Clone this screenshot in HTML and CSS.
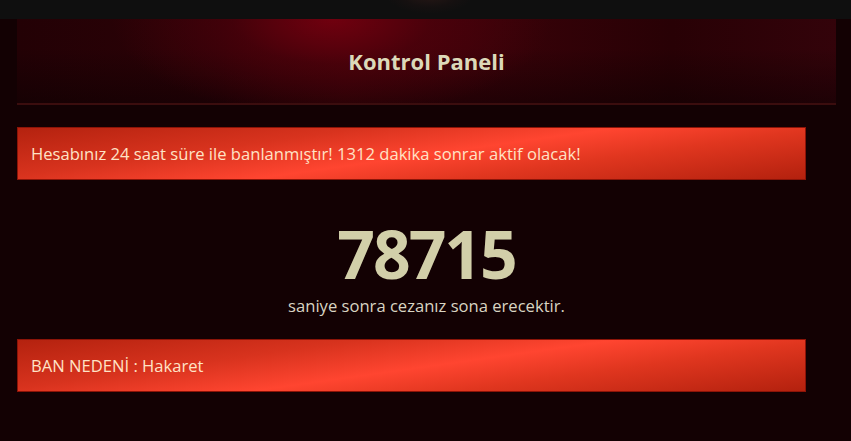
FILE: index.html
```html
<!DOCTYPE html>
<html lang="tr">
<head>
    <meta charset="UTF-8">
    <meta name="viewport" content="width=device-width, initial-scale=1.0">
    <title>Kontrol Paneli</title>
    <link rel="stylesheet" href="styles.css">
</head>
<body>
    <div class="topbar"><div class="emblem"></div></div>
    <div class="panel">
        <div class="panel-head">
            <h1>Kontrol Paneli</h1>
        </div>

        <div class="alert">Hesabınız 24 saat süre ile banlanmıştır! 1312 dakika sonrar aktif olacak!</div>

        <div class="countdown">
            <div class="seconds" id="seconds">78715</div>
            <div class="note">saniye sonra cezanız sona erecektir.</div>
        </div>

        <div class="alert">BAN NEDENİ : Hakaret</div>
    </div>
</body>
</html>
```

FILE: styles.css
```css
body { margin: 0; background: #130103; font-family: "Open Sans", "Liberation Sans", sans-serif; }

/* site header strip above the panel */
.topbar { height: 19px; background: #0f0f0f; position: relative; overflow: hidden; }
.topbar .emblem {
    position: absolute; left: 385px; top: -26px; width: 90px; height: 40px;
    border-radius: 50%;
    background: radial-gradient(ellipse at center, rgba(70, 35, 30, 0.45) 0%, rgba(40, 20, 20, 0.25) 45%, rgba(15, 15, 15, 0) 70%);
}

.panel { margin: 0 15px 0 17px; }

.panel-head {
    height: 84px; border-bottom: 2px solid #3b0d0e;
    background:
        radial-gradient(ellipse 220px 100px at 315px 0px, rgba(115, 0, 15, 0.95) 0%, rgba(85, 0, 12, 0.55) 45%, rgba(50, 0, 8, 0) 100%),
        linear-gradient(180deg, rgba(0, 0, 0, 0) 35%, rgba(10, 0, 2, 0.5) 100%),
        linear-gradient(90deg, #230105 0%, #2c0207 25%, #400309 40%, #3a0209 55%, #280105 80%, #33030a 100%);
    display: flex; align-items: center; justify-content: center;
}
.panel-head h1 {
    margin: 0; font-size: 22px; font-weight: 700; color: #dcd9b9;
}

.alert {
    margin: 22px 30px 0 0; padding: 15px 13px; height: 21px;
    border: 1px solid #8c1408;
    background: linear-gradient(172deg, #b4220f 0%, #d8331e 30%, #ff4530 52%, #e0361f 70%, #b3210e 100%);
    color: #ffe3c6; font-size: 16.6px; line-height: 21px;
}

.countdown { text-align: center; padding-top: 40px; height: 97px; }
.seconds {
    font-size: 66px; font-weight: 700; color: #d2cfa9; line-height: 66px;
    letter-spacing: -2px;
}
.note { margin-top: 8px; font-size: 16.6px; color: #d9d4c2; }
```
